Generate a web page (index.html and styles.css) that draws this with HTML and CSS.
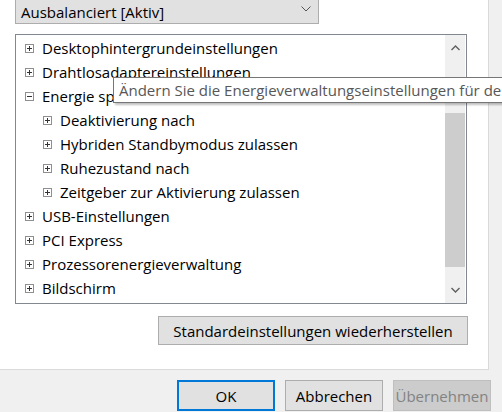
FILE: index.html
```html
<!DOCTYPE html>
<html lang="de">
<head>
<meta charset="utf-8">
<title>Energieoptionen</title>
<link rel="stylesheet" href="styles.css">
</head>
<body>
<div class="page">
  <div class="combo">
    <span class="combo-text">Ausbalanciert [Aktiv]</span>
    <svg class="combo-arrow" width="10" height="6" viewBox="0 0 10 6"><path d="M0.5 0.5 L5 5 L9.5 0.5" fill="none" stroke="#555" stroke-width="1"/></svg>
  </div>
  <div class="tree">
    <div class="rows">
      <div class="row"><svg class="box" width="9" height="9" viewBox="0 0 9 9"><rect x="0.5" y="0.5" width="8" height="8" fill="#fff" stroke="#8f8f8f"/><path d="M2 4.5H7M4.5 2V7" stroke="#333"/></svg><span>Desktophintergrundeinstellungen</span></div>
      <div class="row"><svg class="box" width="9" height="9" viewBox="0 0 9 9"><rect x="0.5" y="0.5" width="8" height="8" fill="#fff" stroke="#8f8f8f"/><path d="M2 4.5H7M4.5 2V7" stroke="#333"/></svg><span>Drahtlosadaptereinstellungen</span></div>
      <div class="row"><svg class="box" width="9" height="9" viewBox="0 0 9 9"><rect x="0.5" y="0.5" width="8" height="8" fill="#fff" stroke="#8f8f8f"/><path d="M2 4.5H7" stroke="#333"/></svg><span>Energie sparen</span></div>
      <div class="row child"><svg class="box" width="9" height="9" viewBox="0 0 9 9"><rect x="0.5" y="0.5" width="8" height="8" fill="#fff" stroke="#8f8f8f"/><path d="M2 4.5H7M4.5 2V7" stroke="#333"/></svg><span>Deaktivierung nach</span></div>
      <div class="row child"><svg class="box" width="9" height="9" viewBox="0 0 9 9"><rect x="0.5" y="0.5" width="8" height="8" fill="#fff" stroke="#8f8f8f"/><path d="M2 4.5H7M4.5 2V7" stroke="#333"/></svg><span>Hybriden Standbymodus zulassen</span></div>
      <div class="row child"><svg class="box" width="9" height="9" viewBox="0 0 9 9"><rect x="0.5" y="0.5" width="8" height="8" fill="#fff" stroke="#8f8f8f"/><path d="M2 4.5H7M4.5 2V7" stroke="#333"/></svg><span>Ruhezustand nach</span></div>
      <div class="row child"><svg class="box" width="9" height="9" viewBox="0 0 9 9"><rect x="0.5" y="0.5" width="8" height="8" fill="#fff" stroke="#8f8f8f"/><path d="M2 4.5H7M4.5 2V7" stroke="#333"/></svg><span>Zeitgeber zur Aktivierung zulassen</span></div>
      <div class="row"><svg class="box" width="9" height="9" viewBox="0 0 9 9"><rect x="0.5" y="0.5" width="8" height="8" fill="#fff" stroke="#8f8f8f"/><path d="M2 4.5H7M4.5 2V7" stroke="#333"/></svg><span>USB-Einstellungen</span></div>
      <div class="row"><svg class="box" width="9" height="9" viewBox="0 0 9 9"><rect x="0.5" y="0.5" width="8" height="8" fill="#fff" stroke="#8f8f8f"/><path d="M2 4.5H7M4.5 2V7" stroke="#333"/></svg><span>PCI Express</span></div>
      <div class="row"><svg class="box" width="9" height="9" viewBox="0 0 9 9"><rect x="0.5" y="0.5" width="8" height="8" fill="#fff" stroke="#8f8f8f"/><path d="M2 4.5H7M4.5 2V7" stroke="#333"/></svg><span>Prozessorenergieverwaltung</span></div>
      <div class="row"><svg class="box" width="9" height="9" viewBox="0 0 9 9"><rect x="0.5" y="0.5" width="8" height="8" fill="#fff" stroke="#8f8f8f"/><path d="M2 4.5H7M4.5 2V7" stroke="#333"/></svg><span>Bildschirm</span></div>
    </div>
    <div class="scrollbar">
      <div class="sb-btn"><svg width="9" height="6" viewBox="0 0 9 6"><path d="M0.5 5 L4.5 1 L8.5 5" fill="none" stroke="#606060" stroke-width="1.4"/></svg></div>
      <div class="sb-track"><div class="sb-thumb"></div></div>
      <div class="sb-btn"><svg width="9" height="6" viewBox="0 0 9 6"><path d="M0.5 1 L4.5 5 L8.5 1" fill="none" stroke="#606060" stroke-width="1.4"/></svg></div>
    </div>
  </div>
  <div class="restore-row">
    <button class="btn restore">Standardeinstellungen wiederherstellen</button>
  </div>
</div>
<div class="footer">
  <button class="btn dlg ok">OK</button>
  <button class="btn dlg">Abbrechen</button>
  <button class="btn dlg disabled">Übernehmen</button>
</div>
<div class="tooltip">Ändern Sie die Energieverwaltungseinstellungen für den Computer.</div>
</body>
</html>
```

FILE: styles.css
```css
html, body {
  margin: 0;
  padding: 0;
}
body {
  width: 502px;
  height: 412px;
  overflow: hidden;
  background: #f0f0f0;
  position: relative;
  font-family: "Open Sans", "Noto Sans", "Liberation Sans", sans-serif;
  font-size: 15px;
  color: #000;
}
.page {
  width: 489px;
  height: 370px;
  background: #fff;
  border-right: 1px solid #d9d9d9;
  border-bottom: 1px solid #dadada;
  display: flex;
  flex-direction: column;
  box-sizing: border-box;
}
.combo {
  margin-top: -6px;
  margin-left: 15px;
  width: 304px;
  height: 30px;
  box-sizing: border-box;
  border: 1px solid #adadad;
  background: #e1e1e1;
  display: flex;
  align-items: center;
  justify-content: space-between;
  padding: 5px 7px 0 5px;
}
.combo-text {
  font-size: 15px;
  color: #000;
}
.combo-arrow {
  display: block;
  margin-top: -5px;
}
.tree {
  margin-top: 10px;
  margin-left: 15px;
  width: 452px;
  height: 270px;
  box-sizing: border-box;
  border: 1px solid #828790;
  display: flex;
}
.rows {
  flex: 1;
  padding-top: 1px;
  display: flex;
  flex-direction: column;
}
.row {
  height: 24px;
  display: flex;
  align-items: center;
  white-space: nowrap;
  padding-left: 9px;
}
.row.child {
  padding-left: 27px;
}
.box {
  display: block;
  flex: none;
  margin-right: 8px;
}
.scrollbar {
  width: 20px;
  margin-right: 1px;
  background: #f0f0f0;
  display: flex;
  flex-direction: column;
}
.sb-btn {
  height: 26px;
  display: flex;
  align-items: center;
  justify-content: center;
}
.sb-btn svg {
  display: block;
}
.sb-track {
  flex: 1;
  padding-top: 52px;
  padding-bottom: 10px;
  display: flex;
  flex-direction: column;
}
.sb-thumb {
  flex: 1;
  background: #cdcdcd;
}
.restore-row {
  margin-top: 12px;
  padding-left: 158px;
}
.btn {
  font-family: "Open Sans", "Noto Sans", "Liberation Sans", sans-serif;
  font-size: 15px;
  color: #000;
  background: #e1e1e1;
  border: 1px solid #adadad;
  box-sizing: border-box;
  margin: 0;
  padding: 0;
}
.restore {
  width: 310px;
  height: 29px;
}
.footer {
  display: flex;
  padding-top: 10px;
  padding-left: 177px;
  gap: 10px;
}
.dlg {
  width: 98px;
  height: 31px;
}
.ok {
  border: 2px solid #0078d7;
}
.disabled {
  background: #cccccc;
  border-color: #bfbfbf;
  color: #838383;
}
.tooltip {
  position: absolute;
  left: 113px;
  top: 77px;
  height: 26px;
  box-sizing: border-box;
  padding: 0 6px 0 5px;
  border: 1px solid #767676;
  background: #fff;
  color: #575757;
  font-size: 15px;
  line-height: 24px;
  white-space: nowrap;
  box-shadow: 2px 2px 2px rgba(0, 0, 0, 0.25);
}
```
